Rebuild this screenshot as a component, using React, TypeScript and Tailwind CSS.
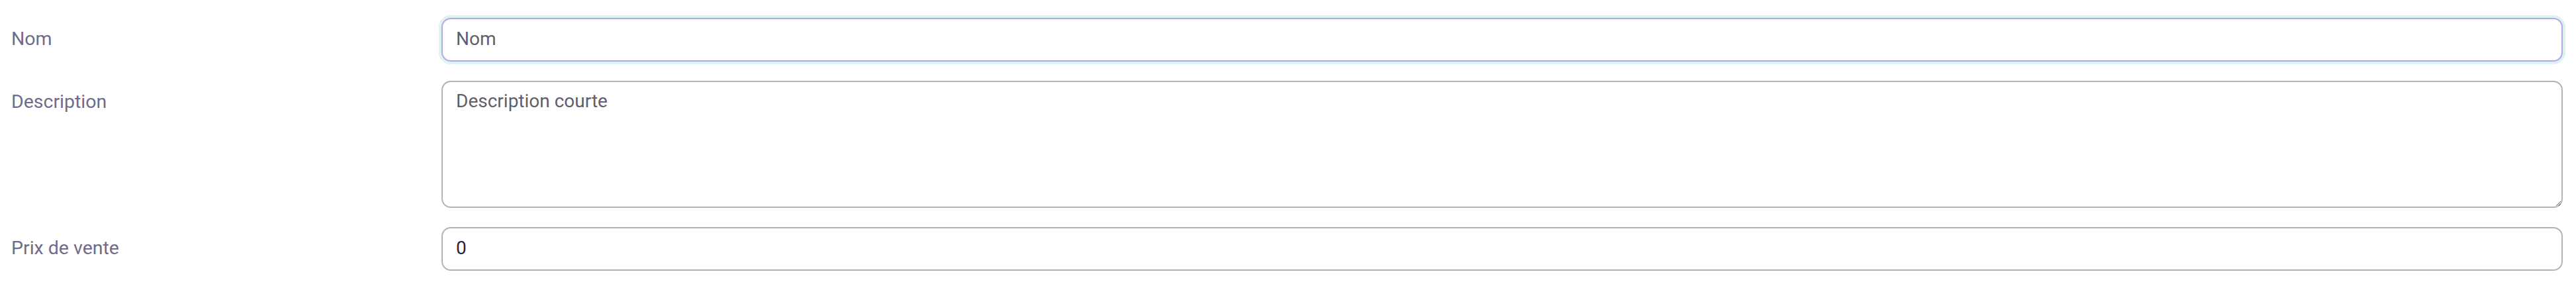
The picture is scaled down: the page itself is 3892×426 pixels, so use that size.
import React from 'react';

const labelCls = 'pt-[11px] text-[28.5px] leading-[42px] text-[#6f6b8d]';
const fieldCls =
  'w-full rounded-[14px] border-2 bg-white px-[20px] text-[28px] outline-none placeholder:text-[#5f5e6e] text-[#272541]';

export default function App() {
  return (
    <div className="min-h-[426px] bg-white pl-[17px] pr-[20px] pt-[27px] font-['Roboto',sans-serif]">
      <div className="grid grid-cols-[650px_1fr] gap-y-[29px]">
        <label htmlFor="nom" className={labelCls}>Nom</label>
        <input
          id="nom"
          type="text"
          placeholder="Nom"
          className={`${fieldCls} h-[66px] pb-[4px] border-[#b1a9ef] ring-4 ring-[#dcf3ee]`}
        />

        <label htmlFor="description" className={labelCls}>Description</label>
        <textarea
          id="description"
          placeholder="Description courte"
          className={`${fieldCls} h-[192px] border-[#b3b3b3] py-[8px] leading-[42px]`}
        />

        <label htmlFor="prix" className={labelCls}>Prix de vente</label>
        <input
          id="prix"
          type="number"
          defaultValue={0}
          className={`${fieldCls} h-[66px] pb-[4px] border-[#b3b3b3] [appearance:textfield] [&::-webkit-inner-spin-button]:appearance-none`}
        />
      </div>
    </div>
  );
}
